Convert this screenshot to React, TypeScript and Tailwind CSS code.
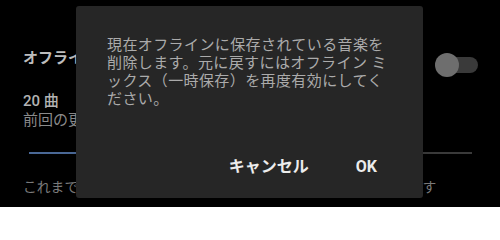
export default function App() {
  return (
    <div
      className="relative h-[207px] w-[500px] overflow-hidden bg-black"
      style={{ fontFamily: 'Roboto, "Noto Sans CJK JP", sans-serif' }}
    >
      {/* page behind the dialog */}
      <div className="flex flex-col pl-[23px] pr-[22px] pt-[49px]">
        <div className="flex items-start justify-between">
          <span className="text-[15px] font-bold leading-[18px] text-[#bdbdbd]">
            オフライン ミックス（一時保存）
          </span>
          <div className="relative mt-[4px] h-[24px] w-[43px]">
            <div className="absolute left-[5px] top-[4px] h-[16px] w-[38px] rounded-full bg-[#3a3a3a]" />
            <div className="absolute left-0 top-0 h-[24px] w-[24px] rounded-full bg-[#6e6e6e]" />
          </div>
        </div>
        <div className="mt-[15px] text-[15px] font-medium leading-[18px] text-[#b3b3b3]">20 曲</div>
        <div className="mt-[1px] text-[15px] leading-[18px] text-[#8a8a8a]">前回の更新: 2 時間前</div>
        <div className="ml-[6px] mr-[6px] mt-[23px] flex h-[2px]">
          <div className="w-[45%] bg-[#4a6896]" />
          <div className="flex-1 bg-[#3a3a3a]" />
        </div>
        <div className="mt-[24px] whitespace-nowrap text-[13.8px] leading-[18px] text-[#7a7a7a]">
          これまでの再生履歴をもとに、おすすめの曲を自動的に保存します
        </div>
      </div>

      {/* dialog */}
      <div className="absolute left-[76px] top-[6px] flex h-[192px] w-[347px] flex-col rounded-[3px] bg-[#262626] shadow-lg">
        <p className="ml-[31px] mt-[30px] w-[288px] text-[15px] leading-[18px] tracking-[0.4px] text-[#ababab]">
          現在オフラインに保存されている音楽を削除します。元に戻すにはオフライン ミックス（一時保存）を再度有効にしてください。
        </p>
        <div className="mt-auto flex justify-end gap-[47px] pb-[21px] pr-[46px]">
          <button className="text-[16px] font-bold leading-[20px] text-[#ececec]">キャンセル</button>
          <button className="text-[16px] font-bold leading-[20px] text-[#ececec]">OK</button>
        </div>
      </div>
    </div>
  )
}
